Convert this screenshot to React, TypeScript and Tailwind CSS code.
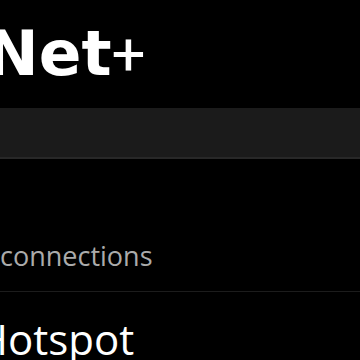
export default function App() {
  return (
    <div className="w-[360px] h-[360px] overflow-hidden bg-black text-white font-['Open_Sans',sans-serif]">
      <div className="h-[108px] pt-[22px] -ml-[14px] whitespace-nowrap text-[63px] leading-none font-['DejaVu_Sans',sans-serif]">
        <span className="font-bold">Net</span>
        <span className="font-['Roboto',sans-serif] font-normal text-[60px]">+</span>
      </div>
      <div className="h-[51px] bg-[#1b1b1b] border-b-2 border-[#282828]" />
      <div className="h-[132px] pt-[83px]">
        <div className="text-[27px] leading-none text-[#ababab] whitespace-nowrap">connections</div>
      </div>
      <div className="h-px bg-[#1c1c1c]" />
      <div className="pt-[26px] -ml-[23px]">
        <div className="text-[42px] leading-none whitespace-nowrap">Hotspot</div>
      </div>
    </div>
  );
}
